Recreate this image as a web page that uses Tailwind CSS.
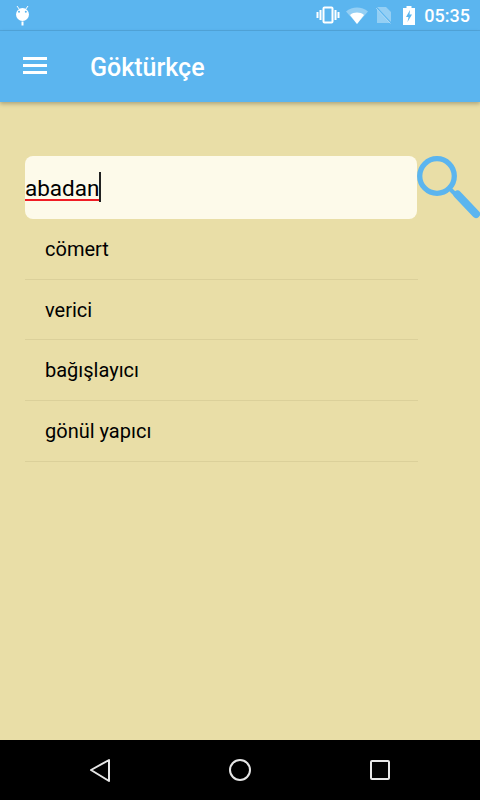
<!DOCTYPE html>
<html lang="en">
<head>
  <meta charset="UTF-8" />
  <meta name="viewport" content="width=device-width, initial-scale=1.0" />
  <title>Göktürkçe</title>
  <script src="https://cdn.jsdelivr.net/npm/@tailwindcss/browser@4"></script>
</head>
<body class="font-['Roboto',sans-serif]">
  <div class="w-[480px] h-[800px] flex flex-col overflow-hidden bg-[#e9dea7]">

    <!-- Status bar -->
    <div class="h-[31px] shrink-0 bg-[#5bb5ef] border-b border-[#52a6dc] flex items-center pl-[14px] pr-[10px]">
      <svg width="17" height="22" viewBox="0 0 17 22">
        <path d="M3 2l2.500 3.500M14 2l-2.500 3.500" stroke="#fff" stroke-width="1"/>
        <ellipse cx="8.500" cy="10.500" rx="6.500" ry="6.500" fill="#fff"/>
        <circle cx="5" cy="7.800" r="1" fill="#5bb5ef"/>
        <circle cx="11.800" cy="7.800" r="1" fill="#5bb5ef"/>
        <rect x="7.500" y="17.500" width="2" height="4" fill="#fff"/>
      </svg>
      <div class="ml-auto flex items-center">
        <svg width="24" height="18" viewBox="0 0 24 18" fill="none">
          <rect x="7.500" y="1.500" width="9" height="15" rx="1" stroke="#fff" stroke-width="2"/>
          <rect x="3.500" y="4" width="2" height="10" fill="#fff"/>
          <rect x="18.500" y="4" width="2" height="10" fill="#fff"/>
          <rect x="0.500" y="6" width="2" height="6" fill="#fff"/>
          <rect x="21.500" y="6" width="2" height="6" fill="#fff"/>
        </svg>
        <svg width="22" height="17" viewBox="0 0 22 17" class="ml-[6px]">
          <path d="M0 4.500C6 -1 16 -1 22 4.500L11 17Z" fill="#fff" fill-opacity="0.35"/>
          <path d="M4 8C8 4.800 14 4.800 18 8L11 17Z" fill="#fff"/>
        </svg>
        <svg width="16" height="18" viewBox="0 0 16 18" class="ml-[8px]">
          <path d="M1 1h9l5 5v11H1Z" fill="#fff" fill-opacity="0.35"/>
          <path d="M0.500 1.500L15 17" stroke="#5bb5ef" stroke-width="1.500"/>
          <path d="M0 2L14.500 17.500" stroke="#fff" stroke-opacity="0.4" stroke-width="1"/>
        </svg>
        <svg width="12" height="19" viewBox="0 0 12 19" class="ml-[11px]">
          <path d="M3.500 0h5v2H12v17H0V2h3.500Z" fill="#fff"/>
          <path d="M7 4L3 11h2.500L4.500 16 9 8.500H6.500Z" fill="#5bb5ef"/>
        </svg>
        <span class="ml-[9px] mt-[2px] text-[18px] leading-none font-medium text-white">05:35</span>
      </div>
    </div>

    <!-- App bar -->
    <div class="h-[71px] shrink-0 bg-[#5bb5ef] flex items-center shadow-[0_2px_4px_rgba(0,0,0,0.25)] relative">
      <div class="ml-[23px] w-[24px] flex flex-col gap-[4.500px] mt-[-2px]">
        <div class="h-[2.500px] bg-white"></div>
        <div class="h-[2.500px] bg-white"></div>
        <div class="h-[2.500px] bg-white"></div>
      </div>
      <h1 class="ml-[43px] mt-[3px] text-[25px] font-medium text-white">Göktürkçe</h1>
    </div>

    <!-- Search -->
    <div class="flex-1 pt-[54px] pl-[25px]">
      <div class="flex items-start">
        <div class="w-[392px] h-[63px] rounded-[8px] bg-[#fdfaea] flex items-center shrink-0">
          <span class="text-[22.500px] leading-[18px] pb-[2px] text-black border-b-2 border-[#f01c25] mt-[5px]">abadan</span>
          <div class="w-[2px] h-[30px] bg-[#222] mt-[-1px]"></div>
        </div>
        <svg width="63" height="63" viewBox="0 0 63 63" fill="none" class="shrink-0">
          <circle cx="20" cy="20" r="17.300" stroke="#5bb5ef" stroke-width="5.300"/>
          <path d="M33 33L39 39" stroke="#5bb5ef" stroke-width="4"/>
          <path d="M40.500 38.500L59 58" stroke="#5bb5ef" stroke-width="8" stroke-linecap="round"/>
        </svg>
      </div>

      <ul class="w-[393px] text-[20px] text-black">
        <li class="h-[60.700px] pl-[20px] flex items-center border-b border-[#dbd09a]">cömert</li>
        <li class="h-[60.700px] pl-[20px] flex items-center border-b border-[#dbd09a]">verici</li>
        <li class="h-[60.700px] pl-[20px] flex items-center border-b border-[#dbd09a]">bağışlayıcı</li>
        <li class="h-[60.700px] pl-[20px] flex items-center border-b border-[#dbd09a]">gönül yapıcı</li>
      </ul>
    </div>

    <!-- Nav bar -->
    <div class="h-[60px] shrink-0 bg-black flex items-center">
      <svg width="24" height="24" viewBox="0 0 24 24" fill="none" class="ml-[88px]">
        <path d="M21 2L3 12L21 23Z" stroke="#e6e6e6" stroke-width="2" stroke-linejoin="round"/>
      </svg>
      <svg width="24" height="24" viewBox="0 0 24 24" fill="none" class="ml-[116px]">
        <circle cx="12" cy="12" r="10" stroke="#e6e6e6" stroke-width="2"/>
      </svg>
      <svg width="20" height="20" viewBox="0 0 20 20" fill="none" class="ml-[118px]">
        <rect x="1" y="1" width="18" height="18" rx="1" stroke="#e6e6e6" stroke-width="2"/>
      </svg>
    </div>
  </div>
</body>
</html>
